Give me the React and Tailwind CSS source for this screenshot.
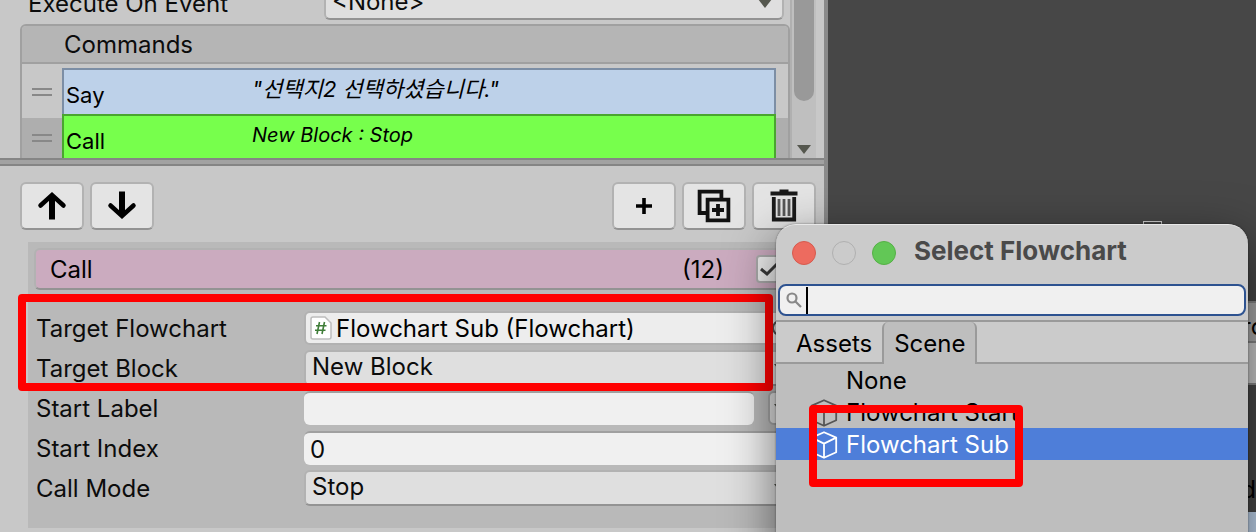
import { useState } from 'react'
import clsx from 'clsx'

const COMMANDS = [
  { id: 1, name: 'Say', summary: '"선택지2 선택하셨습니다."', size: 'text-[22px]', color: 'bg-[#bdd1e9] border-[#7c8ea5]' },
  { id: 2, name: 'Call', summary: 'New Block : Stop', size: 'text-xl', color: 'bg-[#77ff4c] border-[#4aa52f]', selected: true },
]

const SCENE_ITEMS = ['None', 'Flowchart Start', 'Flowchart Sub']

function Caret({ className }) {
  return (
    <svg viewBox="0 0 14 9" className={clsx('w-3.5 h-[9px] fill-[#55574e] pointer-events-none', className)}>
      <path d="M0 0h14L7 9z" />
    </svg>
  )
}

function ToolButton({ label, children }) {
  return (
    <button
      type="button"
      aria-label={label}
      className="flex items-center justify-center w-16 h-12 rounded-md border-2 border-[#b2b2b2] border-b-[#939393] bg-[#e4e4e4]"
    >
      {children}
    </button>
  )
}

function Dropdown({ id, value }) {
  return (
    <div className="relative flex-1">
      <select
        id={id}
        defaultValue={value}
        className="block w-full h-9 pl-1.5 pb-0.5 appearance-none rounded-md border-2 border-[#b2b2b2] border-b-[#939393] bg-[#dfdfdf] leading-7"
      >
        <option>{value}</option>
      </select>
      <Caret className="absolute right-5 top-3.5" />
    </div>
  )
}

function Field({ id, label, children }) {
  return (
    <div className="flex h-[34px] items-center">
      <label htmlFor={id} className="w-[268px] shrink-0 pt-0.5">{label}</label>
      {children}
    </div>
  )
}

function Cube() {
  return (
    <svg viewBox="0 0 28 28" className="w-7 h-7 shrink-0" fill="none" stroke="currentColor" strokeWidth="1.8" strokeLinejoin="round">
      <path d="M14 1.2 26.2 6.6v14.6L14 26.8 1.8 21.2V6.6zM1.8 6.6 14 12.6l12.2-6M14 12.6v14.2" />
    </svg>
  )
}

function Highlight({ className }) {
  return <div className={clsx('absolute border-8 border-[#ff0000] rounded-sm pointer-events-none', className)} />
}

function CommandList() {
  return (
    <div className="flex h-[158px] overflow-hidden">
      <div className="flex-1 min-w-0">
        {/* scrolled so only the lower part of this row shows */}
        <div className="flex items-end h-5 pl-7 pr-1.5">
          <label htmlFor="event" className="w-[296px] shrink-0 leading-8">Execute On Event</label>
          <div className="relative flex-1">
            <select
              id="event"
              defaultValue="<None>"
              className="block w-full h-9 pl-1.5 appearance-none rounded-md border-2 border-[#b2b2b2] border-b-[#939393] bg-[#dfdfdf] leading-8"
            >
              <option>&lt;None&gt;</option>
            </select>
            <Caret className="absolute right-3 bottom-3" />
          </div>
        </div>

        <div className="mt-1 ml-5 h-40 rounded-t-md border-2 border-[#a0a0a0] bg-[#c8c8c8] overflow-hidden">
          <h2 className="h-[38px] pl-[42px] leading-[38px] border-b-2 border-[#a0a0a0] bg-[#b5b5b5]">Commands</h2>
          {COMMANDS.map(c => (
            <div key={c.id} className={clsx('flex h-[54px] pr-3', c.selected && 'bg-[#aeaeae]')}>
              <div className={clsx('w-10 shrink-0 px-2.5', c.selected ? 'pt-4' : 'pt-6')}>
                <div className="h-2 border-y-2 border-[#888888]" />
              </div>
              <div
                className={clsx('relative flex flex-1 h-[50px] pl-0.5 border-2 text-[22px] text-black', c.color, c.selected ? '-mt-1' : 'mt-1')}
              >
                <span className="w-[186px] pt-1.5 leading-[38px]">{c.name}</span>
                <em className={clsx('leading-[38px]', c.size)}>{c.summary}</em>
              </div>
            </div>
          ))}
        </div>
      </div>

      {/* scrollbar */}
      <div className="flex flex-col items-center justify-between w-[26px] mr-2 pb-1 border-l-2 border-[#b0b0b0] bg-[#bfbfbf]">
        <div className="w-5 h-[101px] rounded-b-full bg-[#999999]" />
        <Caret />
      </div>
    </div>
  )
}

function CommandEditor() {
  const [enabled, setEnabled] = useState(true)

  return (
    <div className="flex-1 pt-4 pl-5 pr-2">
      <div className="flex gap-1.5">
        <ToolButton label="Move up">
          <svg viewBox="0 0 30 30" className="w-[30px] h-[30px]" fill="none" stroke="#000" strokeWidth="6">
            <path d="M15 28.500V6" />
            <path d="M3.500 14.500 15 4l11.500 10.500" strokeLinecap="round" strokeWidth="4.500" />
          </svg>
        </ToolButton>
        <ToolButton label="Move down">
          <svg viewBox="0 0 30 30" className="w-[30px] h-[30px]" fill="none" stroke="#000" strokeWidth="6">
            <path d="M15 .500v22" />
            <path d="M3.500 14.500 15 25l11.500-10.500" strokeLinecap="round" strokeWidth="4.500" />
          </svg>
        </ToolButton>
        <div className="flex-1" />
        <ToolButton label="Add">
          <svg viewBox="0 0 16 16" className="w-4 h-4" stroke="#000" strokeWidth="3.600">
            <path d="M8 0v16M0 8h16" />
          </svg>
        </ToolButton>
        <ToolButton label="Duplicate">
          <svg viewBox="0 0 34 34" className="w-[34px] h-[34px]" fill="none" stroke="#111" strokeWidth="3.800">
            <path d="M9 24H2.600V2.600h21.800V9" />
            <path d="M10.600 10.600h20.800v20.800H10.600zM21 15v12M15 21h12" />
          </svg>
        </ToolButton>
        <ToolButton label="Delete">
          <svg viewBox="0 0 30 34" className="w-[30px] h-[34px]" fill="none" stroke="#1a1a1a">
            <path d="M1.500 4.500h27" strokeWidth="4" />
            <path d="M10.500 2h9" strokeWidth="3" />
            <path d="M4.800 8v22.500h20.400V8" strokeWidth="3.800" />
            <path d="M10 10v17M15 10v17M20 10v17" strokeWidth="2.800" stroke="#555" />
          </svg>
        </ToolButton>
      </div>

      <div className="mt-3 ml-2 pt-1.5 px-2 h-[286px] bg-[#b9b9b9]">
        <div className="flex items-center h-[42px] -ml-0.5 pl-3.5 pr-[22px] rounded-md border-2 border-[#b2b2b2] border-b-[#939393] bg-[#cbabbf] text-black">
          <span className="flex-1 pt-0.5">Call</span>
          <span className="pt-0.5">(12)</span>
          <label className="relative ml-8 w-7 h-7">
            <input
              type="checkbox"
              aria-label="Enabled"
              checked={enabled}
              onChange={e => setEnabled(e.target.checked)}
              className="block w-7 h-7 appearance-none rounded-sm border-2 border-[#aaaaaa] bg-[#eeeeee]"
            />
            {enabled && (
              <svg viewBox="0 0 28 28" className="absolute inset-0 pointer-events-none" fill="none" stroke="#3a3a3a" strokeWidth="3">
                <path d="m5 14 6 5L22 8" />
              </svg>
            )}
          </label>
        </div>

        <div className="flex flex-col gap-1.5 mt-[21px]">
          <div className="relative flex flex-col gap-1.5">
            <Field id="flowchart" label="Target Flowchart">
              <button
                id="flowchart"
                type="button"
                className="flex flex-1 items-center h-[34px] pl-1 pr-2 rounded-md border-2 border-[#b2b2b2] bg-[#ededed]"
              >
                <svg viewBox="0 0 22 24" className="w-[22px] h-6 mr-1">
                  <path d="M3 1h12l6 6v14a2 2 0 0 1-2 2H3a2 2 0 0 1-2-2V3a2 2 0 0 1 2-2z" fill="#fff" stroke="#bdbdbd" strokeWidth="1.500" />
                  <path d="M9.500 6 7 18M14.500 6 12 18M6 9.700h10.500M5 14.300h10.500" stroke="#3f7d38" strokeWidth="1.600" fill="none" />
                </svg>
                <span className="flex-1 pt-0.5 text-left text-black">Flowchart Sub (Flowchart)</span>
                <span className="w-4 h-4 mr-2.5 rounded-full border-2 border-[#555555]" />
              </button>
            </Field>
            <Field id="block" label="Target Block">
              <Dropdown id="block" value="New Block" />
            </Field>
            <Highlight className="-left-[18px] right-[35px] -top-[17px] -bottom-1.5" />
          </div>
          <Field id="start-label" label="Start Label">
            <input id="start-label" className="flex-1 min-w-0 h-[34px] px-1.5 rounded-md border-t-2 border-[#a0a0a0] bg-[#f0f0f0]" />
            <button type="button" aria-label="Pick label" className="flex items-center w-10 h-[34px] ml-3.5 pl-1 rounded-md border-2 border-[#a5a5a5] bg-[#dfdfdf]">
              <Caret />
            </button>
          </Field>
          <Field id="start-index" label="Start Index">
            <input id="start-index" defaultValue="0" className="flex-1 min-w-0 h-[34px] px-1.5 rounded-md border-t-2 border-[#a0a0a0] bg-[#f0f0f0]" />
          </Field>
          <Field id="call-mode" label="Call Mode">
            <Dropdown id="call-mode" value="Stop" />
          </Field>
        </div>
      </div>
    </div>
  )
}

function SelectWindow() {
  const [tab, setTab] = useState('Scene')
  const [selected, setSelected] = useState('Flowchart Sub')

  return (
    <section className="absolute top-56 right-2 -bottom-8 w-[472px] rounded-t-[20px] bg-[#cbcbcb] text-black border-t border-[#e8e8e8] shadow-[0_16px_50px_rgba(0,0,0,0.55),0_0_2px_rgba(0,0,0,0.5)]">
      <header className="flex items-center gap-4 h-14 pl-4">
        <span className="w-6 h-6 rounded-full border border-[#d65a4e] bg-[#ed6b5f]" />
        <span className="w-6 h-6 rounded-full border border-[#b0b0b0]" />
        <span className="w-6 h-6 rounded-full border border-[#55b046] bg-[#62c756]" />
        <h1 className="ml-0.5 pb-1 text-[26px] leading-8 font-bold text-[#4a4a4a]">Select Flowchart</h1>
      </header>

      <label className="flex items-center h-8 mx-0.5 mt-[3px] pl-1.5 rounded-lg border-2 border-[#2d5290] bg-[#f0f0f0]">
        <svg viewBox="0 0 16 16" className="w-4 h-4" fill="none" stroke="#888" strokeWidth="2.200">
          <circle cx="6" cy="6" r="4.500" />
          <path d="m9 9 6 6" />
        </svg>
        <span className="w-0.5 h-[27px] ml-1 bg-black" />
        <input type="text" aria-label="Search" className="flex-1 min-w-0 bg-transparent outline-none" />
      </label>

      <div className="flex h-11 mt-1 pl-2.5 border-y-2 border-[#9a9a9a]">
        {['Assets', 'Scene'].map(t => (
          <button
            key={t}
            type="button"
            onClick={() => setTab(t)}
            className={clsx('px-2.5 pt-0.5 leading-10', t === tab ? 'h-[42px] rounded-t-md border-x-2 border-[#9a9a9a] bg-[#bebebe]' : 'h-10')}
          >
            {t}
          </button>
        ))}
      </div>

      <ul className="relative h-full bg-[#bebebe]">
        {SCENE_ITEMS.map(item => (
          <li key={item}>
            <button
              type="button"
              onClick={() => setSelected(item)}
              className={clsx('flex items-center gap-2 w-full h-8 pl-[34px] pt-px text-left leading-8', item === selected && 'bg-[#4e7ed9] text-white')}
            >
              {item === 'None' ? <span className="w-7" /> : <span className={item === selected ? 'text-white' : 'text-[#555555]'}><Cube /></span>}
              {item}
            </button>
          </li>
        ))}
        <Highlight className="left-[33px] top-[41px] w-[214px] h-[82px]" />
      </ul>
    </section>
  )
}

export default function App() {
  return (
    <main className="relative grid grid-cols-[828fr_428fr] h-screen overflow-hidden bg-[#474747] text-[#0c0c0c] text-2xl leading-8 font-['Inter','Noto_Sans_CJK_KR',sans-serif]">
      <div className="flex flex-col h-screen overflow-hidden border-r-4 border-[#8a8a8a] bg-[#c8c8c8]">
        <CommandList />
        <div className="h-2 shrink-0 border-y-2 border-[#858585] bg-[#a2a2a2]" />
        <CommandEditor />
      </div>

      {/* flowchart canvas with its nodes */}
      <div className="relative overflow-hidden">
        <div className="absolute right-[94px] top-[221px] w-[19px] h-4 border border-[#cccccc]" />
        <div className="absolute -right-10 top-[301px] w-52 h-[84px] border-y-2 border-[#858585] bg-[#c8c8c8]">
          <div className="h-10 pl-[154px] border-b-2 border-[#858585] bg-[#a8a8a8] text-black leading-[48px]">ro</div>
        </div>
        <div className="absolute right-0 top-[474px] text-black">d</div>
        <div className="absolute right-0 top-[512px] w-20 h-10 bg-[#bdd1e9]" />
      </div>

      <SelectWindow />
    </main>
  )
}
